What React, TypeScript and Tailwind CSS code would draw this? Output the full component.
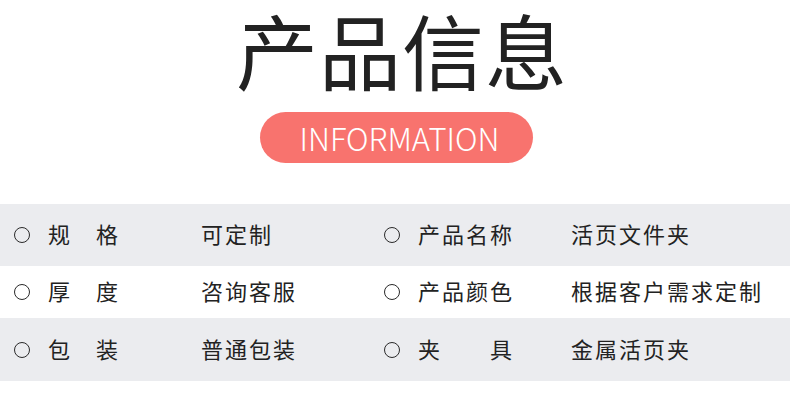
import React from "react";

const rows = [
  { bg: "bg-[#ebecef]", h: "h-[62px]", a: ["规　格", "可定制"], b: ["产品名称", "活页文件夹"] },
  { bg: "bg-white", h: "h-[52px]", a: ["厚　度", "咨询客服"], b: ["产品颜色", "根据客户需求定制"] },
  { bg: "bg-[#ebecef]", h: "h-[63px]", a: ["包　装", "普通包装"], b: ["夹　　具", "金属活页夹"] },
];

function Cell({ label, value }: { label: string; value: string }) {
  return (
    <div className="flex items-center">
      <div className="mt-[4px] w-[16px] h-[16px] rounded-full border-[1.8px] border-[#2a2a2a] shrink-0 box-border" />
      <div className="ml-[18px] w-[153px] whitespace-pre">{label}</div>
      <div className="whitespace-nowrap">{value}</div>
    </div>
  );
}

export default function App() {
  return (
    <div
      className="w-[790px] h-[402px] bg-white overflow-hidden text-[#222]"
      style={{ fontFamily: '"Noto Sans CJK SC", "Noto Sans", sans-serif' }}
    >
      <div className="-mt-[11px] pl-[14px] text-center text-[82px] leading-[120px] tracking-[1px] text-[#222]">
        产品信息
      </div>
      <div className="mt-[3px] ml-[260px] w-[273px] h-[51px] rounded-full bg-[#f8736e] flex items-center justify-center pl-[6px] text-white text-[31px] font-light leading-none">
        INFORMATION
      </div>
      <div className="mt-[41px] flex flex-col text-[22px] tracking-[2px] leading-none">
        {rows.map((r, i) => (
          <div key={i} className={`${r.bg} ${r.h} grid grid-cols-[370px_1fr] pl-[14px] pb-[4px] items-center`}>
            <Cell label={r.a[0]} value={r.a[1]} />
            <Cell label={r.b[0]} value={r.b[1]} />
          </div>
        ))}
      </div>
    </div>
  );
}
